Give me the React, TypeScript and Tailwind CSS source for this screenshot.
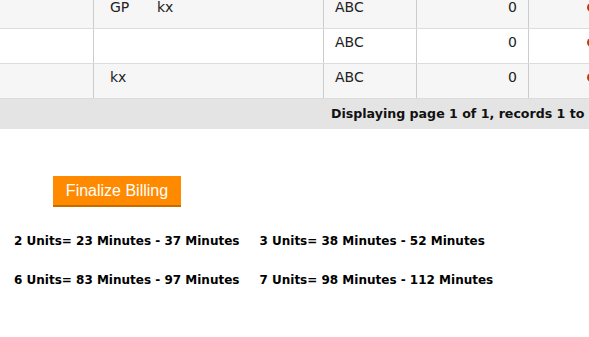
import React from "react";

const rows = [
  { bg: "bg-[#f6f6f6]", a: "GP", b: "kx" },
  { bg: "bg-white", a: "", b: "" },
  { bg: "bg-[#f6f6f6]", a: "kx", b: "" },
];

export default function App() {
  return (
    <div className="w-[589px] h-[337px] overflow-hidden bg-white">
      <div className="w-[700px] -mt-[6px]" style={{ fontFamily: '"DejaVu Sans", Verdana, sans-serif' }}>
        {rows.map((r, i) => (
          <div key={i} className={`flex h-[35px] border-b border-[#dcdcdc] ${r.bg} text-[14px] leading-[20px] text-[#222]`}>
            <div className="w-[94px] border-r border-[#cccccc]" />
            <div className="w-[230px] border-r border-[#cccccc] pl-[16px] pt-[3px] flex">
              <span className="inline-block w-[47px]">{r.a}</span>
              <span>{r.b}</span>
            </div>
            <div className="w-[93px] border-r border-[#cccccc] pl-[11px] pt-[3px]">ABC</div>
            <div className="w-[112px] border-r border-[#cccccc] pr-[11px] pt-[3px] text-right">0</div>
            <div className="flex-1 pl-[58px] pt-[9px]">
              <div className="w-[12px] h-[9px] rounded-full bg-[#b84000]" />
            </div>
          </div>
        ))}
        <div className="h-[30px] bg-[#e4e4e4] flex items-center pl-[331px] whitespace-nowrap font-bold text-[12.6px] text-[#111]">
          Displaying page 1 of 1, records 1 to 3 of 3
        </div>
      </div>
      <div className="pt-[47px] pl-[53px]">
        <button
          className="h-[31px] w-[128px] bg-[#ff8a00] border-b-2 border-[#c96c00] text-white text-[16px] leading-[29px] text-center"
          style={{ fontFamily: '"Liberation Sans", Arial, sans-serif' }}
        >
          Finalize Billing
        </button>
      </div>
      <div
        className="pl-[14px] pt-[27px] flex flex-col gap-[24px] font-bold text-[12px] leading-[15px] text-black"
        style={{ fontFamily: '"DejaVu Sans", Verdana, sans-serif' }}
      >
        <div className="flex gap-[20px] whitespace-nowrap">
          <span>2 Units= 23 Minutes - 37 Minutes</span>
          <span>3 Units= 38 Minutes - 52 Minutes</span>
        </div>
        <div className="flex gap-[20px] whitespace-nowrap">
          <span>6 Units= 83 Minutes - 97 Minutes</span>
          <span>7 Units= 98 Minutes - 112 Minutes</span>
        </div>
      </div>
    </div>
  );
}
